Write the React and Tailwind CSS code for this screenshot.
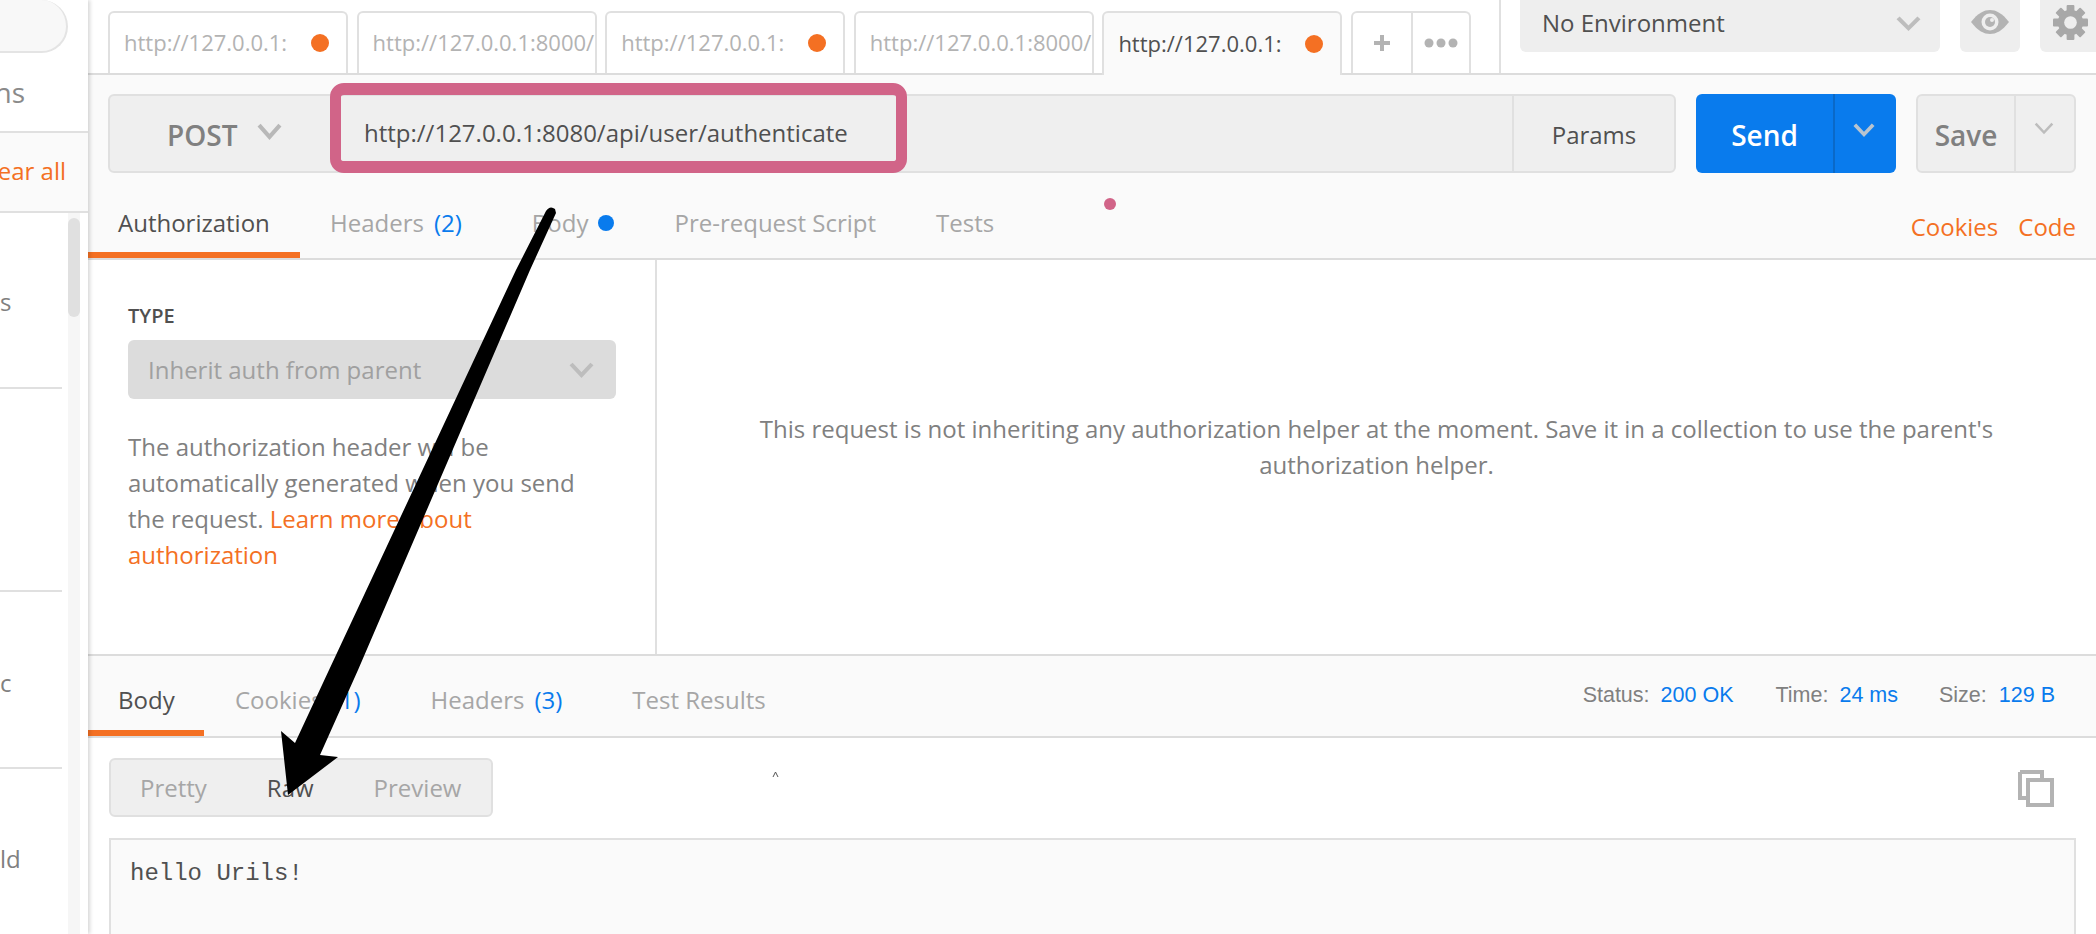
import React from "react";

const Chev = ({ w = 24, h = 16, c = "#b8b8b8", sw = 4, className = "" }) => (
  <svg width={w} height={h} viewBox="0 0 24 16" className={className} preserveAspectRatio="none">
    <path d="M2 2 L12 13 L22 2" fill="none" stroke={c} strokeWidth={sw} />
  </svg>
);

const Tab = ({ text, dot, active }) => (
  <div
    className={
      "w-[240px] h-[62px] shrink-0 mr-[8.6px] rounded-t-[6px] border-2 border-[#e0e0e0] flex items-center pl-[14px] overflow-hidden whitespace-nowrap text-[22px] " +
      (active ? "border-b-0 h-[64px] -mb-[2px] bg-[#fafafa] text-[#505050] relative" : "border-b-0 bg-white text-[#b3b3b3]")
    }
  >
    <span className="-mt-[2px]">{text}</span>
    {dot && <span className="ml-auto mr-[17px] w-[18px] h-[18px] rounded-full bg-[#f47023] shrink-0" />}
  </div>
);

export default function App() {
  return (
    <div
      className="relative flex w-[2096px] h-[934px] overflow-hidden bg-white text-[24px] text-[#808080]"
      style={{ fontFamily: '"Open Sans", sans-serif' }}
    >
      {/* Sidebar */}
      <aside className="relative z-10 w-[88px] shrink-0 flex flex-col bg-white shadow-[2px_0_4px_rgba(0,0,0,0.16)]">
        <div className="h-[131px] shrink-0 flex flex-col">
          <div className="h-[51px] -ml-[60px] box-content w-[126px] rounded-br-[32px] rounded-tr-[32px] border-2 border-l-0 border-t-0 border-[#e4e4e4] bg-[#f8f8f8]" />
          <div className="flex-1 flex justify-end items-center overflow-hidden whitespace-nowrap text-[28px] text-[#8a8a8a] pr-[63px]">
            Collections
          </div>
        </div>
        <div className="h-[82px] shrink-0 border-y-2 border-[#e0e0e0] bg-[#fafafa] flex justify-end items-center overflow-hidden whitespace-nowrap text-[#f47023] pr-[22px] pb-[2px]">
          Clear all
        </div>
        <div className="flex-1 flex min-h-0">
          <div className="w-[62px] shrink-0 flex flex-col text-[#808080]">
            <div className="h-[176px] border-b-2 border-[#e0e0e0] flex items-center pt-[4px] overflow-hidden">s</div>
            <div className="h-[203px] border-b-2 border-[#e0e0e0]" />
            <div className="h-[177px] border-b-2 border-[#e0e0e0] flex items-center pt-[6px]">c</div>
            <div className="flex-1 flex items-center pt-[14px]">ld</div>
          </div>
          <div className="ml-[6px] w-[12px] bg-[#f6f6f6] pt-[5px]">
            <div className="h-[99px] rounded-full bg-[#e0e0e0]" />
          </div>
        </div>
      </aside>

      {/* Main */}
      <main className="flex-1 min-w-0 flex flex-col">
        {/* Top bar */}
        <header className="h-[75px] shrink-0 border-b-2 border-[#dcdcdc] flex">
          <div className="flex items-end pl-[20px] w-[1411px] shrink-0">
            <Tab text="http://127.0.0.1:" dot />
            <Tab text="http://127.0.0.1:8000/" />
            <Tab text="http://127.0.0.1:" dot />
            <Tab text="http://127.0.0.1:8000/" />
            <Tab text="http://127.0.0.1:" dot active />
            <div className="h-[62px] w-[120px] shrink-0 rounded-t-[6px] border-2 border-b-0 border-[#e0e0e0] flex">
              <div className="w-[60px] flex items-center justify-center border-r-2 border-[#e0e0e0]">
                <svg width="18" height="18" viewBox="0 0 18 18">
                  <path d="M9 1 V17 M1 9 H17" stroke="#b3b3b3" strokeWidth="4" />
                </svg>
              </div>
              <div className="flex-1 flex items-center justify-center">
                <svg width="34" height="12" viewBox="0 0 34 12">
                  <circle cx="5" cy="6" r="4.5" fill="#b3b3b3" />
                  <circle cx="17" cy="6" r="4.5" fill="#b3b3b3" />
                  <circle cx="29" cy="6" r="4.5" fill="#b3b3b3" />
                </svg>
              </div>
            </div>
          </div>
          <div className="w-[2px] h-full bg-[#e0e0e0] shrink-0" />
          <div className="h-[52px] w-[420px] ml-[19px] shrink-0 rounded-b-[6px] bg-[#eeeeee] flex items-center pl-[22px] pr-[19px] text-[#505050]">
            <span className="-mt-[6px]">No Environment</span>
            <Chev w={25} h={15} c="#bdbdbd" className="ml-auto -mt-[5px]" />
          </div>
          <div className="h-[52px] w-[60px] ml-[20px] shrink-0 rounded-b-[6px] bg-[#eeeeee] flex items-center justify-center">
            <svg width="40" height="24" viewBox="0 0 40 24" className="-mt-[8px]">
              <path d="M1 12 C8 3 14 0 20 0 C26 0 32 3 39 12 C32 21 26 24 20 24 C14 24 8 21 1 12 Z" fill="#b3b3b3" />
              <circle cx="20" cy="12" r="8.5" fill="#eeeeee" />
              <circle cx="20" cy="12" r="5" fill="#b3b3b3" />
              <circle cx="22" cy="10" r="2" fill="#eeeeee" />
            </svg>
          </div>
          <div className="h-[52px] w-[56px] ml-[20px] shrink-0 rounded-bl-[6px] bg-[#eeeeee] flex items-center pl-[13px]">
            <svg width="35" height="35" viewBox="0 0 36 36" className="-mt-[8px]">
              <g fill="#a8a8a8">
                <rect x="14" y="0" width="8" height="36" rx="1" />
                <rect x="14" y="0" width="8" height="36" rx="1" transform="rotate(45 18 18)" />
                <rect x="14" y="0" width="8" height="36" rx="1" transform="rotate(90 18 18)" />
                <rect x="14" y="0" width="8" height="36" rx="1" transform="rotate(135 18 18)" />
                <circle cx="18" cy="18" r="13" />
              </g>
              <circle cx="18" cy="18" r="6.5" fill="#eeeeee" />
            </svg>
          </div>
        </header>

        {/* Request */}
        <section className="h-[185px] shrink-0 bg-[#fafafa] flex flex-col border-b-2 border-[#dcdcdc]">
          <div className="flex pt-[19px] pl-[20px] h-[98px] shrink-0">
            <div className="w-[1568px] h-[79px] shrink-0 rounded-[6px] border-2 border-[#e0e0e0] bg-[#efefef] flex items-center">
              <div className="w-[221px] shrink-0 flex items-center pl-[57px] font-semibold text-[28px] text-[#808080] pt-[2px]">
                POST
                <Chev w={25} h={17} c="#b8b8b8" className="ml-[20px] -mt-[6px]" />
              </div>
              <div className="flex-1 pl-[33px] text-[#505050] -mt-[1px]">http://127.0.0.1:8080/api/user/authenticate</div>
              <div className="w-[162px] h-full shrink-0 border-l-2 border-[#e0e0e0] flex items-center justify-center text-[#505050] pt-[2px]">
                Params
              </div>
            </div>
            <div className="ml-[20px] w-[200px] h-[79px] shrink-0 rounded-[6px] bg-[#097bed] flex text-white">
              <div className="w-[139px] border-r-2 border-[#0a69c8] flex items-center justify-center font-semibold text-[28px] pt-[2px]">
                Send
              </div>
              <div className="flex-1 flex items-center justify-center pr-[4px]">
                <Chev w={22} h={14} c="#b9c4cf" className="-mt-[8px]" />
              </div>
            </div>
            <div className="ml-[20px] w-[160px] h-[79px] shrink-0 rounded-[6px] border-2 border-[#e0e0e0] bg-[#efefef] flex">
              <div className="w-[98px] border-r-2 border-[#e0e0e0] flex items-center justify-center font-semibold text-[28px] text-[#808080] pt-[2px]">
                Save
              </div>
              <div className="flex-1 flex items-center justify-center pr-[2px]">
                <Chev w={20} h={13} c="#bdbdbd" sw={3} className="-mt-[10px]" />
              </div>
            </div>
          </div>
          <div className="flex-1 flex items-stretch text-[#a6a6a6]">
            <div className="w-[212px] border-b-[6px] border-[#f47023] pl-[30px] pt-[20px] flex items-center text-[#505050]">Authorization</div>
            <div className="ml-[30px] flex items-center pb-[6px] pt-[20px]">
              Headers <span className="ml-[10px] text-[#097bed]">(2)</span>
            </div>
            <div className="ml-[70px] flex items-center pb-[6px] pt-[20px]">
              Body <span className="ml-[10px] w-[16px] h-[16px] rounded-full bg-[#097bed]" />
            </div>
            <div className="ml-[60px] flex items-center pb-[6px] pt-[20px]">Pre-request Script</div>
            <div className="ml-[60px] flex items-center pb-[6px] pt-[20px]">Tests</div>
            <div className="ml-auto mr-[20px] flex items-center text-[#f47023] pt-[22px]">
              Cookies <span className="ml-[20px]">Code</span>
            </div>
          </div>
        </section>

        {/* Auth panel */}
        <section className="h-[396px] shrink-0 flex border-b-2 border-[#dcdcdc]">
          <div className="w-[569px] shrink-0 border-r-2 border-[#e0e0e0] pl-[40px] pr-[58px] pt-[42px] text-[#808080]">
            <div className="text-[20px] font-semibold text-[#505050] leading-[28px]">TYPE</div>
            <div className="mt-[10px] h-[59px] w-[488px] rounded-[6px] bg-[#dcdcdc] flex items-center pl-[20px] pr-[22px] text-[#a0a0a0]">
              <span>Inherit auth from parent</span>
              <Chev w={25} h={16} c="#bdbdbd" className="ml-auto" />
            </div>
            <p className="mt-[30px] leading-[36px]">
              The authorization header will be automatically generated when you send the request.{" "}
              <span className="text-[#f47023]">Learn more about authorization</span>
            </p>
          </div>
          <div className="flex-1 flex items-center justify-center text-center leading-[36px] text-[#808080] px-[40px] pb-[20px]">
            <p>This request is not inheriting any authorization helper at the moment. Save it in a collection to use the parent's authorization helper.</p>
          </div>
        </section>

        {/* Response */}
        <section className="flex-1 min-h-0 flex flex-col">
          <div className="h-[82px] shrink-0 bg-[#fafafa] border-b-2 border-[#dcdcdc] flex items-stretch text-[#a6a6a6]">
            <div className="w-[116px] border-b-[6px] border-[#f47023] pl-[30px] flex items-center text-[#505050] pt-[14px]">Body</div>
            <div className="ml-[31px] flex items-center pb-[4px] pt-[12px]">
              Cookies <span className="ml-[10px] text-[#097bed]">(1)</span>
            </div>
            <div className="ml-[70px] flex items-center pb-[4px] pt-[12px]">
              Headers <span className="ml-[10px] text-[#097bed]">(3)</span>
            </div>
            <div className="ml-[70px] flex items-center pb-[4px] pt-[12px]">Test Results</div>
            <div
              className="ml-auto mr-[41px] flex items-center text-[21.5px] text-[#808080] pb-[14px] pt-[12px]"
              style={{ fontFamily: '"Liberation Sans", sans-serif' }}
            >
              Status:<span className="ml-[11px] text-[#097bed]">200 OK</span>
              <span className="ml-[42px]">Time:</span>
              <span className="ml-[11px] text-[#097bed]">24 ms</span>
              <span className="ml-[41px]">Size:</span>
              <span className="ml-[12px] text-[#097bed]">129 B</span>
            </div>
          </div>
          <div className="flex-1 min-h-0 pl-[21px] pr-[20px] pt-[20px] bg-white">
            <div className="flex items-start justify-between">
              <div className="h-[59px] w-[384px] rounded-[6px] border-2 border-[#e0e0e0] bg-[#efefef] flex items-center text-[#a6a6a6]">
                <span className="ml-[29px]">Pretty</span>
                <span className="ml-[60px] text-[#505050]">Raw</span>
                <span className="ml-[60px]">Preview</span>
              </div>
              <svg width="36" height="37" viewBox="0 0 36 37" className="mt-[12px] mr-[22px]">
                <path d="M2 2 H24 V8 M8 28 H2 V2" fill="none" stroke="#b3b3b3" strokeWidth="4" />
                <rect x="10" y="10" width="24" height="25" fill="none" stroke="#b3b3b3" strokeWidth="4" />
              </svg>
            </div>
            <div
              className="mt-[21px] h-[120px] border-2 border-[#e0e0e0] bg-[#fafafa] pl-[19px] pt-[18px] text-[24px] leading-[32px] text-[#505050]"
              style={{ fontFamily: '"Liberation Mono", monospace' }}
            >
              hello Urils!
            </div>
          </div>
        </section>
      </main>

      {/* Annotations laid over the page */}
      <div className="absolute left-[330px] top-[83px] w-[577px] h-[90px] rounded-[14px] border-x-[11px] border-y-[12px] border-[#d16488]" />
      <div className="absolute left-[1104px] top-[198px] w-[12px] h-[12px] rounded-full bg-[#d16488]" />
      <svg className="absolute left-0 top-0 pointer-events-none" width="2096" height="934" viewBox="0 0 2096 934">
        <path
          d="M546 211 Q550 205 555 209 L556 213 L530 270 L358 670 L320 755 L338 757 L288 795 L281 731 L295 743 L329 670 L516 270 Z"
          fill="#000"
        />
        <path d="M773 777 L775.5 772 L778 777" fill="none" stroke="#555" strokeWidth="1" />
      </svg>
    </div>
  );
}
